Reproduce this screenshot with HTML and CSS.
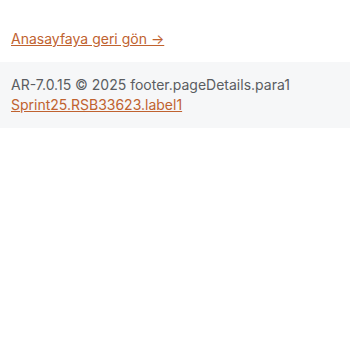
FILE: index.html
```html
<!DOCTYPE html>
<html>
<head>
<meta charset="utf-8">
<link rel="stylesheet" href="styles.css">
</head>
<body>
<main class="main">
  <a class="back-link" href="#">Anasayfaya geri gön →</a>
</main>
<footer class="footer">
  <p class="footer-text">AR-7.0.15 © 2025 footer.pageDetails.para1</p>
  <a class="footer-link" href="#">Sprint25.RSB33623.label1</a>
</footer>
</body>
</html>
```
FILE: styles.css
```css
html, body {
  margin: 0;
  padding: 0;
  background: #ffffff;
  font-family: Inter, "Noto Sans", sans-serif;
}
.main {
  padding: 28px 11px 16px;
  height: 18px;
}
.back-link {
  color: #c0622f;
  font-size: 14px;
  line-height: 18px;
  text-decoration: underline;
}
.footer {
  background: #f6f7f8;
  padding: 13px 11px;
  font-size: 14px;
  line-height: 20px;
  color: #5a5d61;
}
.footer-text {
  margin: 0;
}
.footer-link {
  color: #c0622f;
  text-decoration: underline;
}
```
